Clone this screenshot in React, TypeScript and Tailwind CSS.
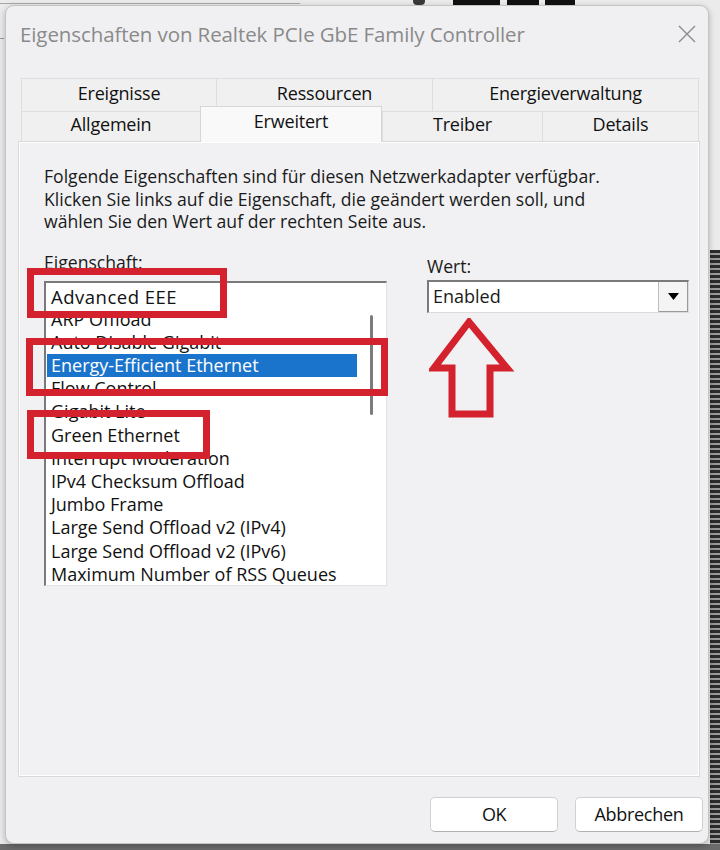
import React from "react";

const items = [
  "Advanced EEE",
  "ARP Offload",
  "Auto Disable Gigabit",
  "Energy-Efficient Ethernet",
  "Flow Control",
  "Gigabit Lite",
  "Green Ethernet",
  "Interrupt Moderation",
  "IPv4 Checksum Offload",
  "Jumbo Frame",
  "Large Send Offload v2 (IPv4)",
  "Large Send Offload v2 (IPv6)",
  "Maximum Number of RSS Queues",
];

function Tab({
  label,
  width,
  height,
  active = false,
}: {
  label: string;
  width: number;
  height: number;
  active?: boolean;
}) {
  return (
    <div
      className={
        active
          ? "relative z-10 -mt-[5px] -mb-px flex items-start justify-center pt-[1px] border border-b-0 border-[#d6d6d6] bg-[#f9f9f9] text-[#111]"
          : "flex items-center justify-center pb-[4px] border border-b-0 border-r-0 border-[#dedede] bg-[#f0f0f0] text-[#111]"
      }
      style={{ width, height: active ? height + 6 : height }}
    >
      <span className="tracking-[-0.2px]">{label}</span>
    </div>
  );
}

function UpArrow() {
  return (
    <svg width="90" height="104" viewBox="0 0 90 104" className="block">
      <path
        d="M40 4 L5 50 L23 50 L23 96 L61 96 L61 50 L78 50 Z"
        fill="none"
        stroke="#d3222e"
        strokeWidth="7"
        strokeLinejoin="miter"
      />
    </svg>
  );
}

export default function App() {
  return (
    <div
      className="relative w-[720px] h-[850px] overflow-hidden bg-[#ebebeb]"
      style={{ fontFamily: '"Open Sans", "Noto Sans", sans-serif' }}
    >
      {/* desktop behind the dialog */}
      <div className="absolute left-0 top-[3px] h-px w-[300px] bg-[#a8a8a8]" />
      <div className="absolute left-0 top-[38px] h-px w-[4px] bg-[#9a9a9a]" />
      <div className="absolute left-[413px] top-0 h-[5px] w-[12px] rounded-b-sm bg-[#3a3a3a]" />
      <div className="absolute left-[453px] top-0 h-[5px] w-[47px] bg-[#111]" />
      <div className="absolute left-[507px] top-0 h-[5px] w-[32px] bg-[#111]" />
      <div className="absolute left-[545px] top-0 h-[5px] w-[30px] bg-[#111]" />
      <div className="absolute right-0 top-[250px] h-[600px] w-[10px] bg-[repeating-linear-gradient(180deg,#2b2b2b_0px,#2b2b2b_3px,#9a9a9a_3px,#9a9a9a_5px)]" />
      <div className="absolute left-0 bottom-0 h-[6px] w-[720px] bg-[#6b6b6b]" />

      {/* dialog window */}
      <div className="pl-[5px] pt-[5px]">
        <div className="relative flex h-[839px] w-[704px] flex-col rounded-[9px] border border-[#c4c4c4] bg-[#f0f0f2] shadow-[0_2px_6px_rgba(0,0,0,0.25)]">
          {/* title bar */}
          <div className="flex h-[56px] items-center justify-between pl-[14px] pr-[9px]">
            <span className="text-[20.5px] tracking-[-0.1px] text-[#8a8a8a]">
              Eigenschaften von Realtek PCIe GbE Family Controller
            </span>
            <svg width="18" height="18" viewBox="0 0 18 18" className="mr-[3px]">
              <path d="M1 1 L17 17 M17 1 L1 17" stroke="#8c8c8c" strokeWidth="1.4" />
            </svg>
          </div>

          {/* tabs */}
          <div className="mt-[16px] pl-[15px] text-[18px]">
            <div className="flex">
              <Tab label="Ereignisse" width={195} height={33} />
              <Tab label="Ressourcen" width={216} height={33} />
              <div className="border-r border-[#dedede]">
                <Tab label="Energieverwaltung" width={266} height={33} />
              </div>
            </div>
            <div className="flex">
              <Tab label="Allgemein" width={179} height={30} />
              <Tab label="Erweitert" width={182} height={30} active />
              <Tab label="Treiber" width={160} height={30} />
              <div className="border-r border-[#dedede]">
                <Tab label="Details" width={156} height={30} />
              </div>
            </div>
          </div>

          {/* tab page */}
          <div className="ml-[12px] h-[636px] w-[682px] border border-[#d9d9d9] bg-[#f1f1f3] shadow-[inset_1px_1px_0_#ffffff,inset_-1px_-1px_0_#ffffff]">
            <div className="pl-[25px] pr-[5px] pt-[23px] text-[18px] leading-[22.5px] text-[#1a1a1a]">
              <p className="text-[17.6px]">
                Folgende Eigenschaften sind für diesen Netzwerkadapter verfügbar.
                <br />
                Klicken Sie links auf die Eigenschaft, die geändert werden soll, und
                <br />
                wählen Sie den Wert auf der rechten Seite aus.
              </p>

              <div className="mt-[18px] flex">
                {/* property list */}
                <div className="w-[343px] shrink-0">
                  <div className="h-[22px] text-[17.6px] leading-[22px]">Eigenschaft:</div>
                  <div className="mt-[8px] flex h-[305px] border-t-2 border-l-2 border-t-[#7a7a7a] border-l-[#7a7a7a] border-r border-b border-r-[#e2e2e2] border-b-[#e2e2e2] bg-white">
                    <div className="w-[311px] overflow-hidden pt-[2px] pl-[1px]">
                      {items.map((it, i) => (
                        <div
                          key={it}
                          className={
                            it === "Energy-Efficient Ethernet"
                              ? "h-[23.2px] whitespace-nowrap pl-[4px] leading-[23.2px] bg-[#1b74cc] text-white"
                              : i === 0
                                ? "h-[23.2px] whitespace-nowrap pl-[4px] text-[18.5px] tracking-[0.5px] leading-[23.2px] text-[#111]"
                                : "h-[23.2px] whitespace-nowrap pl-[4px] leading-[23.2px] text-[#111]"
                          }
                        >
                          {it}
                        </div>
                      ))}
                    </div>
                    <div className="flex flex-1 justify-center pt-[32px]">
                      <div className="h-[100px] w-[3px] rounded-full bg-[#7c7c7c]" />
                    </div>
                  </div>
                </div>

                {/* value */}
                <div className="ml-[40px] w-[262px] shrink-0">
                  <div className="h-[22px] pt-[4px] text-[17.6px] leading-[22px]">Wert:</div>
                  <div className="mt-[7px] flex h-[33px] border-t-2 border-l-2 border-t-[#7a7a7a] border-l-[#7a7a7a] border-r border-b border-r-[#dcdcdc] border-b-[#dcdcdc] bg-white">
                    <div className="flex-1 pl-[4px] leading-[29px]">Enabled</div>
                    <div className="flex w-[30px] items-center justify-center border-l border-[#bdbdbd] bg-[#f4f4f4] shadow-[inset_-1px_-1px_0_#9a9a9a]">
                      <svg width="11" height="7" viewBox="0 0 11 7">
                        <path d="M0 0 L11 0 L5.5 7 Z" fill="#000" />
                      </svg>
                    </div>
                  </div>
                </div>
              </div>
            </div>
          </div>

          {/* buttons */}
          <div className="mt-[20px] flex justify-end gap-[17px] pr-[5px] text-[18px]">
            <button className="h-[35px] w-[128px] rounded-[5px] border border-[#d0d0d0] border-b-[#b0b0b0] bg-white tracking-[-0.4px] text-[#111]">
              OK
            </button>
            <button className="h-[35px] w-[128px] rounded-[5px] border border-[#d0d0d0] border-b-[#b0b0b0] bg-white tracking-[-0.3px] text-[#111]">
              Abbrechen
            </button>
          </div>
        </div>
      </div>

      {/* red annotations */}
      <div className="absolute left-[27px] top-[268px] h-[50px] w-[200px] border-[7px] border-[#d3222e]" />
      <div className="absolute left-[26px] top-[338px] h-[58px] w-[362px] border-[7px] border-[#d3222e]" />
      <div className="absolute left-[27px] top-[410px] h-[49px] w-[183px] border-[7px] border-[#d3222e]" />
      <div className="absolute left-[429px] top-[318px]">
        <UpArrow />
      </div>
    </div>
  );
}
